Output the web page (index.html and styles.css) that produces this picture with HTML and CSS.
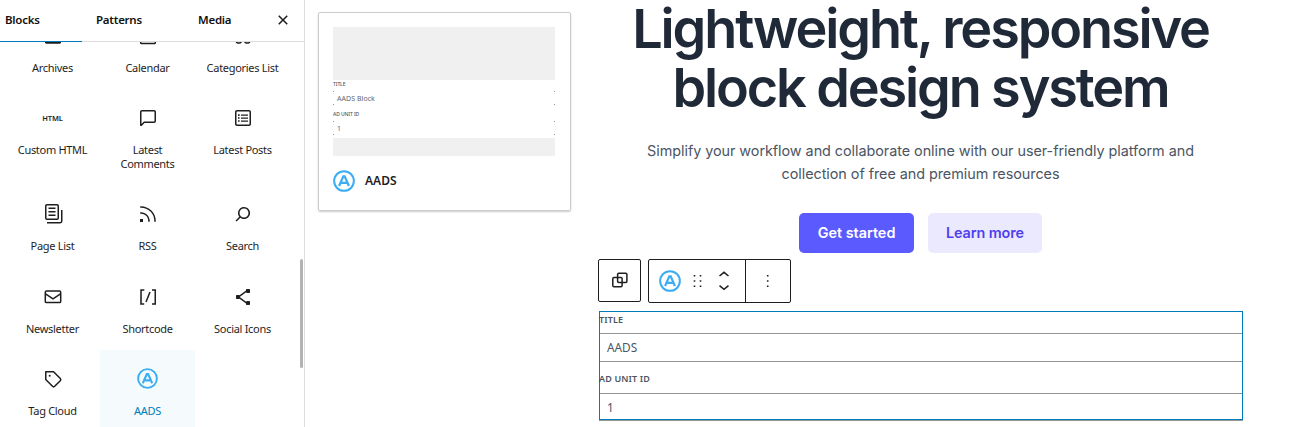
FILE: index.html
```html
<!DOCTYPE html>
<html lang="en">
<head>
<meta charset="utf-8">
<title>Block editor</title>
<link rel="stylesheet" href="styles.css">
</head>
<body>
<svg class="defs" width="0" height="0">
  <symbol id="aads" viewBox="0.6 0.6 22.8 22.8"><g fill="none" stroke="#3cadf4" stroke-width="2.1"><circle cx="12" cy="12" r="10.2"/><path d="M6.900 17.200 11.300 7.200h1.400L17.100 17.200M9.200 14h5.600" stroke-width="2.3"/></g></symbol>
</svg>
<div class="editor">
  <aside class="inserter">
    <header class="tabs">
      <span class="tab tab-active">Blocks</span>
      <span class="tab tab-patterns">Patterns</span>
      <span class="tab tab-media">Media</span>
      <svg class="icon close" viewBox="0 0 24 24"><path d="M12 13.06l3.712 3.713 1.061-1.06L13.061 12l3.712-3.712-1.06-1.06L12 10.938 8.288 7.227l-1.061 1.06L10.939 12l-3.712 3.712 1.06 1.061L12 13.061z"/></svg>
    </header>
    <div class="block-scroll">
      <div class="block-grid">
        <div class="block"><svg class="icon" viewBox="0 0 24 24"><path d="M4 6h16v12.6c0 .7-.5 1.2-1.2 1.2H5.2c-.7 0-1.2-.5-1.2-1.2z"/></svg><span class="label">Archives</span></div>
        <div class="block"><svg class="icon" viewBox="0 0 24 24"><path fill-rule="evenodd" d="M18.500 4h-13C4.700 4 4 4.700 4 5.500v13.200c0 .8.700 1.500 1.500 1.500h13c.8 0 1.500-.7 1.500-1.500V5.500c0-.8-.7-1.500-1.500-1.500zm0 14.700h-13V8h13z"/></svg><span class="label">Calendar</span></div>
        <div class="block"><svg class="icon" viewBox="0 0 24 24"><path fill="none" stroke="#1e1e1e" stroke-width="1.500" d="M5.300 13.500h4.900v3.900a1.500 1.500 0 0 1-1.500 1.500H6.800A1.500 1.500 0 0 1 5.300 17.400zM13.800 13.500h4.900v3.900a1.500 1.500 0 0 1-1.500 1.500h-1.900a1.500 1.500 0 0 1-1.500-1.500z"/></svg><span class="label">Categories List</span></div>

        <div class="block"><span class="icon html-mark">HTML</span><span class="label">Custom HTML</span></div>
        <div class="block"><svg class="icon" viewBox="0 0 24 24"><path d="M18 4H6c-1.1 0-2 .9-2 2v12.9c0 .6.5 1.1 1.1 1.1.3 0 .5-.1.8-.3L8.500 17H18c1.100 0 2-.9 2-2V6c0-1.100-.9-2-2-2zm.5 11c0 .3-.2.5-.5.5H7.900l-2.400 2.400V6c0-.3.2-.5.5-.5h12c.3 0 .5.2.5.5v9z"/></svg><span class="label">Latest<br>Comments</span></div>
        <div class="block"><svg class="icon" viewBox="0 0 24 24"><path fill-rule="evenodd" d="M18 4H6c-1.100 0-2 .9-2 2v12c0 1.100.9 2 2 2h12c1.100 0 2-.9 2-2V6c0-1.100-.9-2-2-2zm.5 14c0 .3-.2.5-.5.5H6c-.3 0-.5-.2-.5-.5V6c0-.3.2-.5.5-.5h12c.3 0 .5.2.5.5v12z"/><path d="M7 8.300h1.600v1.600H7zM7 11.200h1.600v1.600H7zM7 14.200h1.600v1.600H7zM10 8.500h7v1.300h-7zM10 11.400h7v1.300h-7zM10 14.400h7v1.300h-7z"/></svg><span class="label">Latest Posts</span></div>

        <div class="block"><svg class="icon" viewBox="0 0 24 24"><path d="M14.500 5.500h-7V7h7V5.500ZM7.500 9h7v1.500h-7V9Zm7 3.500h-7V14h7v-1.500Z"/><path fill-rule="evenodd" d="M16 2H6a2 2 0 0 0-2 2v12a2 2 0 0 0 2 2h10a2 2 0 0 0 2-2V4a2 2 0 0 0-2-2ZM6 3.500h10a.5.5 0 0 1 .5.5v12a.5.5 0 0 1-.5.5H6a.5.5 0 0 1-.5-.5V4a.5.5 0 0 1 .5-.5Z"/><path d="M20 8v11c0 .69-.31 1-.999 1H6v1.500h13.001c1.520 0 2.499-.982 2.499-2.500V8H20Z"/></svg><span class="label">Page List</span></div>
        <div class="block"><svg class="icon" viewBox="0 0 24 24"><path d="M5 10.200h-.8v1.500H5c1.900 0 3.800.8 5.100 2.100 1.400 1.400 2.100 3.200 2.100 5.100v.8h1.500V19c0-2.300-.9-4.500-2.600-6.200-1.600-1.600-3.800-2.600-6.100-2.600zm10.400-1.600C12.600 5.800 8.900 4.200 5 4.200h-.8v1.500H5c3.500 0 6.900 1.400 9.400 3.900s3.900 5.800 3.900 9.400v.8h1.500V19c0-3.900-1.600-7.600-4.400-10.400zM4 20h3v-3H4v3z"/></svg><span class="label">RSS</span></div>
        <div class="block"><svg class="icon" viewBox="0 0 24 24"><path d="M13 5c-3.300 0-6 2.700-6 6 0 1.400.5 2.700 1.300 3.700l-3.800 3.800 1.100 1.100 3.800-3.800c1 .8 2.300 1.300 3.700 1.300 3.300 0 6-2.700 6-6S16.300 5 13 5zm0 10.500c-2.500 0-4.500-2-4.500-4.500s2-4.500 4.500-4.500 4.500 2 4.500 4.500-2 4.500-4.500 4.500z"/></svg><span class="label">Search</span></div>

        <div class="block"><svg class="icon" viewBox="0 0 24 24"><g fill="none" stroke="#1e1e1e" stroke-width="1.500"><rect x="4.300" y="6" width="15.400" height="11.600" rx="1.200"/><path d="m4.500 8.800 7.500 5 7.500-5"/></g></svg><span class="label">Newsletter</span></div>
        <div class="block"><svg class="icon" viewBox="0 0 24 24"><path d="M16 4.200v1.500h2.500v12.500H16v1.500h4V4.200h-4zM4.200 19.800h4v-1.500H5.800V5.800h2.500V4.200h-4l-.1 15.600zm5.100-3.100l1.400.6 4-10-1.400-.6-4 10z"/></svg><span class="label">Shortcode</span></div>
        <div class="block"><svg class="icon" viewBox="0 0 24 24"><path d="M9 11.800l6.100-4.500c.1.4.4.7.9.7h2c.6 0 1-.4 1-1V5c0-.6-.4-1-1-1h-2c-.6 0-1 .4-1 1v.4l-6.400 4.800c-.2-.1-.4-.2-.6-.2H6c-.6 0-1 .4-1 1v2c0 .6.4 1 1 1h2c.2 0 .4-.1.6-.2l6.400 4.800v.4c0 .6.4 1 1 1h2c.6 0 1-.4 1-1v-2c0-.6-.4-1-1-1h-2c-.5 0-.8.3-.9.7L9 12.200v-.4z"/></svg><span class="label">Social Icons</span></div>

        <div class="block"><svg class="icon" viewBox="0 0 24 24"><path fill-rule="evenodd" d="M4.750 4a.75.75 0 0 0-.75.75v7.826c0 .2.08.39.22.53l6.720 6.716a2.313 2.313 0 0 0 3.276-.001l5.610-5.611a2.315 2.315 0 0 0 0-3.264L13.104 4.220a.75.75 0 0 0-.53-.22H4.750ZM19 12.576a.815.815 0 0 1-.236.574l-5.610 5.611a.814.814 0 0 1-1.153 0L5.500 12.264V5.500h6.763l6.500 6.502a.816.816 0 0 1 .237.574Z"/><circle cx="8.700" cy="8.700" r="1"/></svg><span class="label">Tag Cloud</span></div>
        <div class="block block-selected"><svg class="block-logo"><use href="#aads"/></svg><span class="label">AADS</span></div>
      </div>
      <div class="scrollbar"></div>
    </div>
  </aside>

  <section class="preview-column">
    <div class="preview-card">
      <div class="shade shade-top"></div>
      <div class="mini-label">TITLE</div>
      <div class="mini-input"><i></i><i></i><span>AADS Block</span><i></i><i></i></div>
      <div class="mini-label mini-unit">AD UNIT ID</div>
      <div class="mini-input"><i></i><i></i><span>1</span><i></i><i></i></div>
      <div class="shade shade-bottom"></div>
      <div class="card-title"><svg class="card-logo"><use href="#aads"/></svg><span>AADS</span></div>
    </div>
  </section>

  <main class="canvas">
    <h1 class="headline">Lightweight, responsive<br>block design system</h1>
    <p class="intro">Simplify your workflow and collaborate online with our user-friendly platform and<br>collection of free and premium resources</p>
    <div class="buttons">
      <span class="button button-primary">Get started</span>
      <span class="button button-soft">Learn more</span>
    </div>
    <div class="toolbar">
      <div class="tool-group tool-parent"><svg class="icon" viewBox="0 0 24 24"><g fill="none" stroke="#1e1e1e" stroke-width="1.500"><rect x="4.800" y="9.400" width="9.300" height="9.300" rx="1.200"/><rect x="9.600" y="5.200" width="9.300" height="9.300" rx="1.200"/></g></svg></div>
      <div class="tool-group">
        <div class="tools-main">
          <svg class="tool-logo"><use href="#aads"/></svg>
          <svg class="icon drag" viewBox="0 0 24 24"><path d="M7.700 6h1.600v1.600H7.700zM13.700 6h1.600v1.600h-1.600zM7.700 11.200h1.600v1.600H7.700zM13.700 11.200h1.600v1.600h-1.600zM7.700 16.400h1.600V18H7.700zM13.700 16.400h1.600V18h-1.600z"/></svg>
          <svg class="movers" viewBox="0 0 12 24"><g fill="none" stroke="#1e1e1e" stroke-width="1.500"><path d="m1.500 7 4.500-3.700L10.500 7M1.500 16.700l4.500 3.700 4.500-3.700"/></g></svg>
        </div>
        <div class="tools-more"><svg class="icon" viewBox="0 0 24 24"><path d="M10.900 6h1.600v1.600h-1.600zM10.900 11.200h1.600v1.600h-1.600zM10.900 16.400h1.600V18h-1.600z"/></svg></div>
      </div>
    </div>
    <div class="ad-block">
      <div class="field-label">TITLE</div>
      <div class="field">AADS</div>
      <div class="field-label field-unit">AD UNIT ID</div>
      <div class="field field-last">1</div>
    </div>
  </main>
</div>
</body>
</html>
```
FILE: styles.css
```css
* { box-sizing: border-box; }
body { margin: 0; background: #fff; color: #1e1e1e; font-family: "Noto Sans", "Open Sans", sans-serif; }
.defs { display: block; }
.editor { display: flex; width: 1296px; height: 427px; overflow: hidden; }
.icon { display: block; width: 24px; height: 24px; fill: #1e1e1e; flex: none; }

.inserter { width: 305px; flex: none; border-right: 1px solid #ddd; display: flex; flex-direction: column; }
.tabs { display: flex; height: 42px; flex: none; border-bottom: 1px solid #ddd; font-size: 11.5px; font-weight: 600; line-height: 40px; letter-spacing: -.25px; color: #111; }
.tab { height: 42px; padding-left: 5px; white-space: nowrap; }
.tab-active { width: 82px; border-bottom: 1px solid #007cba; }
.tab-patterns { width: 102px; padding-left: 14px; }
.tab-media { width: 87px; padding-left: 14px; }
.close { margin-top: 8px; }
.block-scroll { flex: 1; min-height: 0; display: flex; overflow: hidden; }
.block-grid { width: 300px; flex: none; padding-left: 5px; margin-top: -34px; display: grid; grid-template-columns: repeat(3, 95px); grid-template-rows: 82px 96px 83px 82px 82px; }
.block { padding-top: 16px; display: flex; flex-direction: column; align-items: center; gap: 13px; }
.label { font-size: 11px; line-height: 14px; letter-spacing: -.3px; text-align: center; white-space: nowrap; }
.block-selected { margin-top: -1px; padding-top: 18px; gap: 15px; background: #f5fafd; color: #007cba; }
.block-logo { display: block; width: 21px; height: 21px; }
.html-mark { font-size: 7.5px; font-weight: 600; line-height: 24px; text-align: center; letter-spacing: -.1px; }
.scrollbar { width: 3px; height: 109px; margin-top: 217px; border-radius: 2px; background: #b3b3b3; }

.preview-column { width: 293px; flex: none; padding: 12px 0 0 13px; }
.preview-card { width: 253px; height: 199px; padding: 14px 15px 14px 14px; border: 1px solid #ccc; border-radius: 2px; box-shadow: 0 1px 2px rgba(0, 0, 0, .2); }
.shade { background: #f0f0f0; }
.shade-top { height: 53px; }
.shade-bottom { height: 18px; margin-top: 3px; }
.mini-label { height: 11px; font-size: 5px; font-weight: 500; line-height: 9px; letter-spacing: -.1px; color: #4b5563; }
.mini-unit { height: 16px; line-height: 18px; }
.mini-input { height: 14px; display: grid; grid-template-columns: 4px 1fr 1px; grid-template-rows: 1px 12px 1px; font-size: 7px; line-height: 13px; letter-spacing: .05px; color: #5f6672; }
.mini-input i { width: 1px; height: 1px; background: #999; }
.mini-input i:nth-of-type(2) { grid-column: 3; }
.mini-input span { grid-column: 2; grid-row: 2; }
.mini-input i:nth-of-type(3) { grid-column: 1; grid-row: 3; }
.mini-input i:nth-of-type(4) { grid-column: 3; grid-row: 3; }
.card-title { display: flex; align-items: center; gap: 10px; margin-top: 14px; font-size: 12px; font-weight: 600; line-height: 22px; }
.card-logo, .tool-logo { width: 22px; height: 22px; display: block; }

.canvas { width: 645px; flex: none; display: flex; flex-direction: column; }
.headline { margin: -1px 0 0; font: 600 54px/59.400px Inter, sans-serif; letter-spacing: -2.130px; text-align: center; color: #1f2937; white-space: nowrap; }
.intro { margin: 21px 0 0; font: 400 14.400px/23px Inter, sans-serif; letter-spacing: -.05px; text-align: center; color: #4b5563; white-space: nowrap; }
.buttons { display: flex; justify-content: center; gap: 14px; margin-top: 28px; }
.button { height: 40px; border-radius: 5px; font: 600 14.400px/40px Inter, sans-serif; text-align: center; }
.button-primary { width: 115px; background: #5a5aff; color: #fff; }
.button-soft { width: 114px; background: #ebe9fd; color: #4f3ff0; letter-spacing: -.1px; }
.toolbar { display: flex; gap: 7px; margin-top: 6px; }
.tool-group { display: flex; height: 44px; border: 1px solid #1e1e1e; border-radius: 2px; }
.tool-parent { width: 43px; height: 43px; align-items: center; justify-content: center; }
.tools-main { width: 97px; display: flex; align-items: center; padding-left: 10px; border-right: 1px solid #1e1e1e; }
.drag { margin-left: 5px; }
.movers { width: 12px; height: 24px; margin-left: 8px; }
.tools-more { width: 44px; display: flex; align-items: center; justify-content: center; }
.ad-block { width: 644px; height: 109px; margin: 8px 0 0 1px; border: 1px solid #007cba; box-shadow: 0 1px 0 #949494; color: #4b5563; }
.field-label { height: 21px; margin-left: -1px; font-size: 9px; font-weight: 600; line-height: 16px; letter-spacing: .15px; }
.field { height: 29px; padding-left: 7px; border: solid #949494; border-width: 1px 0; font-size: 11.800px; line-height: 27px; }
.field-unit { height: 31px; line-height: 34px; }
.field-last { height: 26px; border-bottom: 0; }
```
